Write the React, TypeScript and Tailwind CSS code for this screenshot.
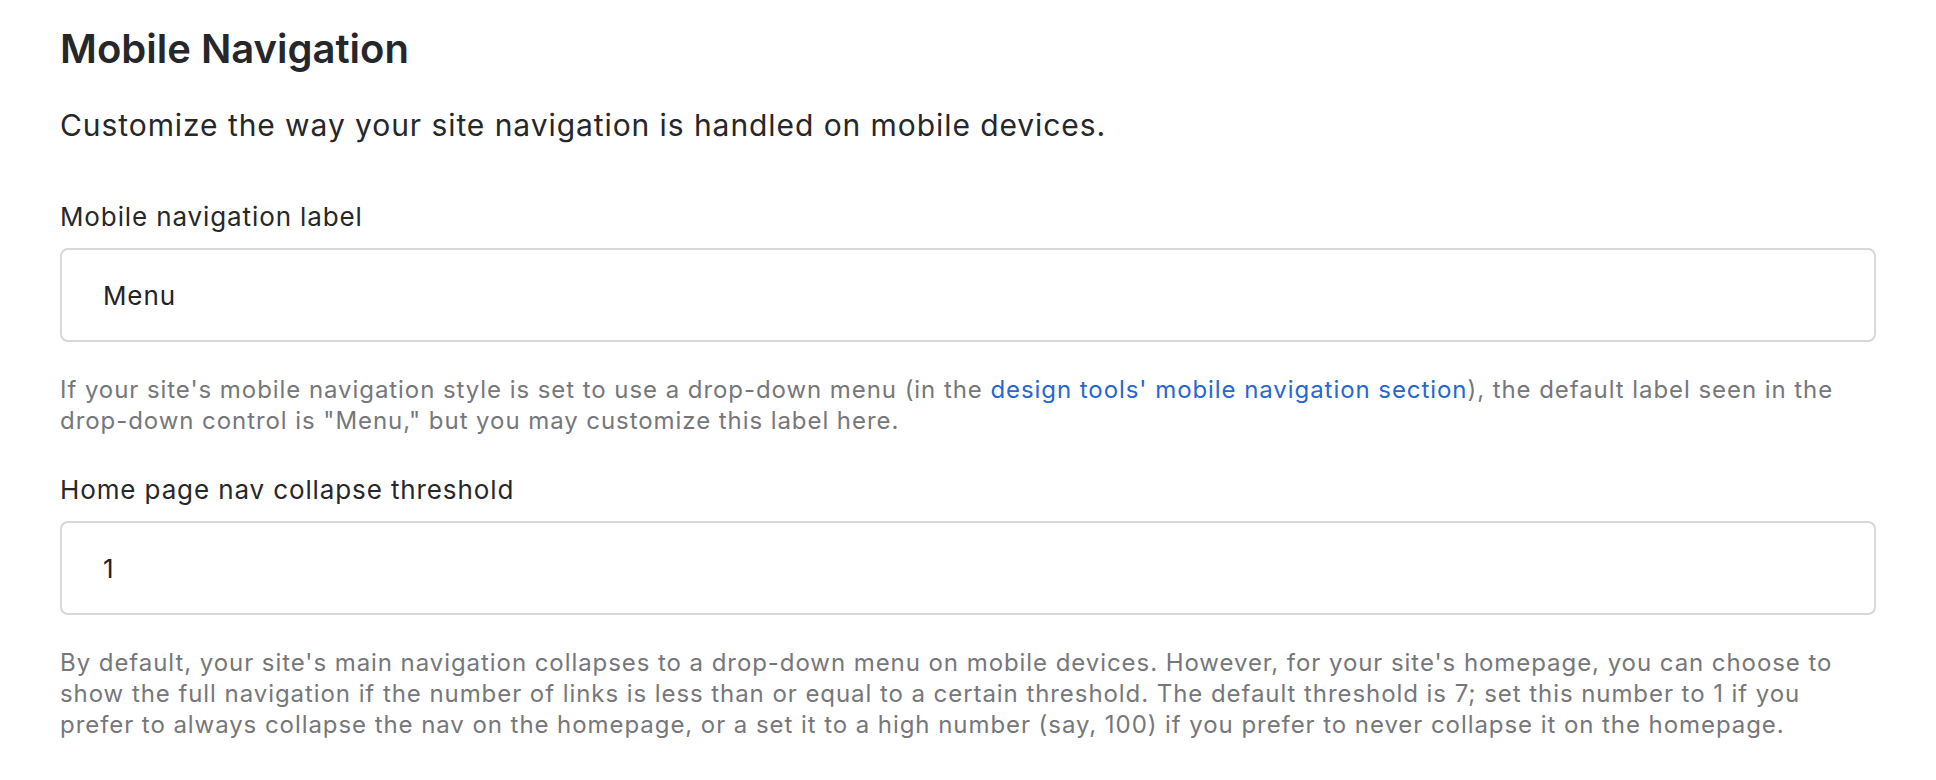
import { useState } from 'react'

const Field = ({
  label,
  value,
  onChange,
  children,
  className = '',
}: {
  label: string
  value: string
  onChange: (v: string) => void
  children: React.ReactNode
  className?: string
}) => (
  <div className={className}>
    <label className="block text-[26px] leading-[32px] tracking-[0.034em] text-[#26282c]">{label}</label>
    <input
      value={value}
      onChange={(e) => onChange(e.target.value)}
      className="mt-[15px] block w-full h-[94px] px-[41px] rounded-[8px] border-2 border-[#d8d8d8] bg-white text-[26px] tracking-[0.034em] text-[#222428] outline-none"
    />
    <p className="mt-[32px] text-[24px] leading-[31px] tracking-[0.039em] text-[#76777b]">{children}</p>
  </div>
)

export default function App() {
  const [navLabel, setNavLabel] = useState('Menu')
  const [threshold, setThreshold] = useState('1')

  return (
    <div className="min-h-screen bg-white px-[60px] pt-[25px] font-['Inter',sans-serif]">
      <h1 className="text-[40px] leading-[48px] font-semibold text-[#25272b]">Mobile Navigation</h1>
      <p className="mt-[34px] text-[30px] leading-[36px] tracking-[0.031em] text-[#25272b]">
        Customize the way your site navigation is handled on mobile devices.
      </p>

      <Field
        className="mt-[58px]"
        label="Mobile navigation label"
        value={navLabel}
        onChange={setNavLabel}
      >
        If your site's mobile navigation style is set to use a drop-down menu (in the{' '}
        <a href="#" className="text-[#2767d0]">
          design tools' mobile navigation section
        </a>
        ), the default label seen in the drop-down control is "Menu," but you may customize this
        label here.
      </Field>

      <Field
        className="mt-[38px]"
        label="Home page nav collapse threshold"
        value={threshold}
        onChange={setThreshold}
      >
        By default, your site's main navigation collapses to a drop-down menu on mobile devices.
        However, for your site's homepage, you can choose to show the full navigation if the number
        of links is less than or equal to a certain threshold. The default threshold is 7; set this
        number to 1 if you prefer to always collapse the nav on the homepage, or a set it to a high
        number (say, 100) if you prefer to never collapse it on the homepage.
      </Field>
    </div>
  )
}
